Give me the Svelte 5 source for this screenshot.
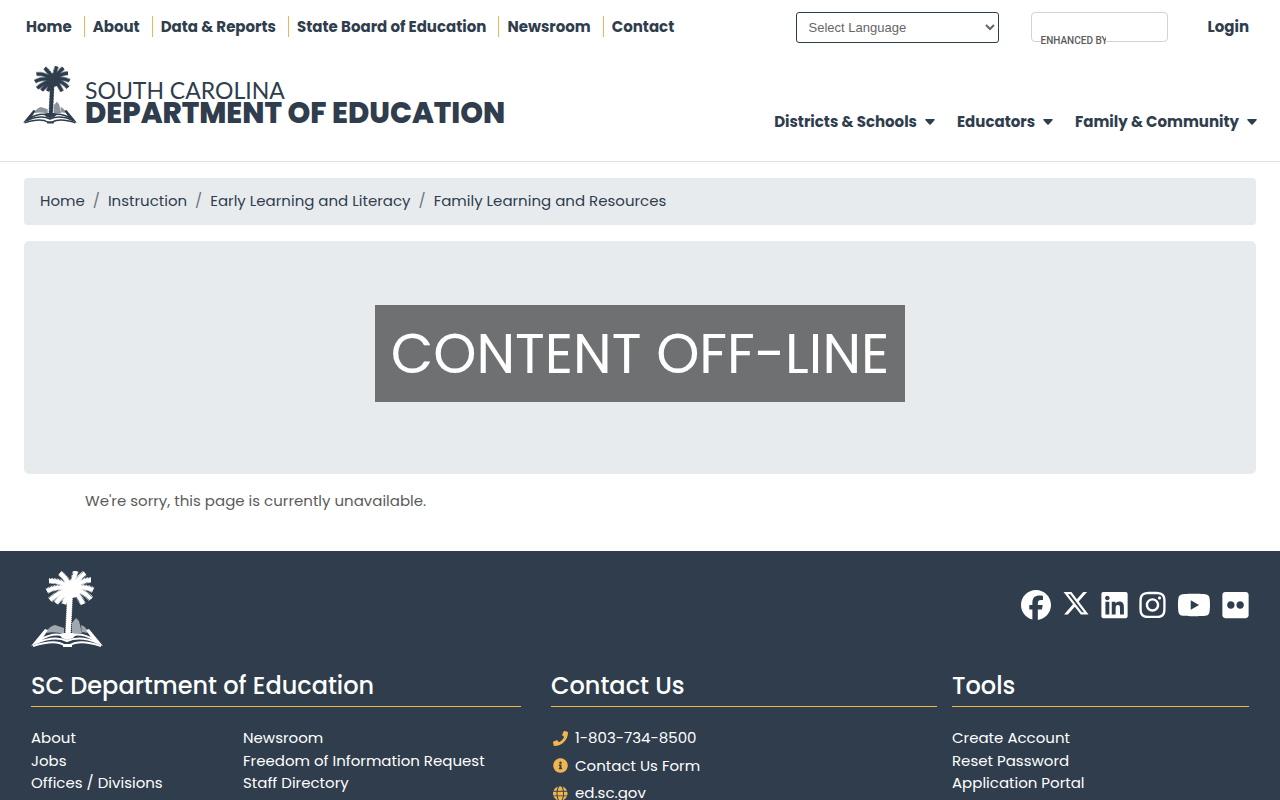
<script lang="ts">
	const topLinks = [
		'Home',
		'About',
		'Data & Reports',
		'State Board of Education',
		'Newsroom',
		'Contact'
	];
	const menus = ['Districts & Schools', 'Educators', 'Family & Community'];
	const crumbs = [
		'Home',
		'Instruction',
		'Early Learning and Literacy',
		'Family Learning and Resources'
	];
	const aboutLinks = ['About', 'Jobs', 'Offices / Divisions'];
	const newsLinks = ['Newsroom', 'Freedom of Information Request', 'Staff Directory'];
	const tools = ['Create Account', 'Reset Password', 'Application Portal', 'Technical Help'];

	// one curve per palm frond, from the crown outwards
	const fronds = [
		'M41 18Q42 8 45 0',
		'M41 18Q36 8 29 2',
		'M41 18Q30 9 18 10',
		'M41 18Q27 14 16 20',
		'M41 18Q29 20 19 29',
		'M41 18Q31 24 25 32',
		'M41 18Q35 26 33 33',
		'M41 18Q46 8 54 2',
		'M41 18Q50 9 60 9',
		'M41 18Q52 14 62 19',
		'M41 18Q52 19 60 28',
		'M41 18Q48 24 52 33'
	];

	// Font Awesome outlines
	const social = [
		{
			name: 'Facebook',
			box: '0 0 512 512',
			width: 30,
			d: 'M512 256C512 114.600 397.400 0 256 0S0 114.600 0 256c0 120 82.700 220.800 194.200 248.500V334.200h-52.800V256h52.800v-33.700c0-87.100 39.400-127.500 125-127.500 16.200 0 44.200 3.200 55.700 6.400V172c-6-.6-16.500-1-29.600-1-42 0-58.200 15.900-58.200 57.200V256h83.600l-14.400 78.200H287v175.900C413.800 494.800 512 386.900 512 256z'
		},
		{
			name: 'X',
			box: '-2 11 516 553',
			width: 28,
			d: 'M389.200 48h70.600L305.600 224.200 487 464H345L233.700 318.600 106.500 464H35.800l164.900-188.500L26.800 48h145.600l100.500 132.900L389.200 48zm-24.800 373.800h39.100L151.100 88h-42l255.300 333.800z'
		},
		{
			name: 'LinkedIn',
			box: '0 0 448 512',
			width: 27,
			d: 'M416 32H31.900C14.300 32 0 46.500 0 64.300v383.400C0 465.500 14.300 480 31.900 480H416c17.600 0 32-14.500 32-32.300V64.300c0-17.800-14.400-32.300-32-32.300zM135.400 416H69V202.200h66.500V416zm-33.200-243c-21.300 0-38.500-17.300-38.500-38.500S80.900 96 102.200 96c21.200 0 38.500 17.300 38.500 38.500 0 21.300-17.200 38.500-38.500 38.500zm282.100 243h-66.400V312c0-24.800-.5-56.700-34.500-56.700-34.600 0-39.900 27-39.900 54.900V416h-66.400V202.200h63.700v29.200h.9c8.900-16.800 30.600-34.500 62.900-34.500 67.200 0 79.700 44.300 79.700 101.900V416z'
		},
		{
			name: 'Instagram',
			box: '0 0 448 512',
			width: 27,
			d: 'M224.100 141c-63.600 0-114.900 51.300-114.900 114.900s51.300 114.900 114.900 114.900S339 319.500 339 255.900 287.700 141 224.100 141zm0 189.600c-41.100 0-74.700-33.500-74.700-74.700s33.500-74.700 74.700-74.700 74.700 33.500 74.700 74.700-33.600 74.700-74.700 74.700zm146.400-194.300c0 14.900-12 26.800-26.800 26.800-14.900 0-26.800-12-26.800-26.800s12-26.800 26.800-26.800 26.800 12 26.800 26.800zm76.100 27.200c-1.700-35.900-9.900-67.700-36.200-93.900-26.200-26.200-58-34.400-93.900-36.200-37-2.100-147.900-2.100-184.900 0-35.800 1.700-67.600 9.900-93.900 36.100s-34.400 58-36.200 93.900c-2.100 37-2.100 147.900 0 184.900 1.700 35.900 9.900 67.700 36.200 93.900s58 34.400 93.900 36.200c37 2.100 147.900 2.100 184.900 0 35.900-1.700 67.700-9.900 93.900-36.200 26.200-26.200 34.400-58 36.200-93.900 2.100-37 2.100-147.800 0-184.800zM398.800 388c-7.800 19.600-22.900 34.700-42.600 42.600-29.500 11.700-99.500 9-132.100 9s-102.700 2.600-132.100-9c-19.600-7.800-34.700-22.900-42.600-42.600-11.700-29.500-9-99.500-9-132.100s-2.600-102.700 9-132.100c7.800-19.600 22.900-34.700 42.600-42.600 29.500-11.700 99.500-9 132.100-9s102.700-2.600 132.100 9c19.600 7.800 34.700 22.900 42.600 42.600 11.700 29.500 9 99.500 9 132.100s2.700 102.700-9 132.100z'
		},
		{
			name: 'YouTube',
			box: '0 0 576 512',
			width: 34,
			d: 'M549.700 124.100c-6.300-23.700-24.800-42.300-48.300-48.600C458.800 64 288 64 288 64S117.200 64 74.600 75.500c-23.500 6.300-42 24.900-48.300 48.600-11.400 42.900-11.400 132.300-11.400 132.300s0 89.400 11.400 132.300c6.300 23.700 24.800 41.500 48.300 47.800C117.200 448 288 448 288 448s170.800 0 213.400-11.500c23.500-6.300 42-24.200 48.300-47.800 11.400-42.900 11.400-132.300 11.400-132.300s0-89.400-11.400-132.300zM232.200 337.600V175.200l142.700 81.200-142.700 81.200z'
		},
		{
			name: 'Flickr',
			box: '0 0 448 512',
			width: 27,
			d: 'M400 32H48C21.500 32 0 53.500 0 80v352c0 26.500 21.500 48 48 48h352c26.500 0 48-21.500 48-48V80c0-26.500-21.500-48-48-48zM144.500 319c-35.100 0-63.500-28.400-63.500-63.500s28.400-63.500 63.500-63.500 63.500 28.400 63.500 63.500-28.400 63.500-63.500 63.500zm159 0c-35.100 0-63.500-28.400-63.500-63.500s28.400-63.500 63.500-63.500 63.500 28.400 63.500 63.500-28.400 63.500-63.500 63.500z'
		}
	];

	const contacts = [
		{
			text: '1-803-734-8500',
			d: 'M493.400 24.600l-104-24c-11.300-2.600-22.900 3.300-27.500 13.900l-48 112c-4.200 9.800-1.400 21.300 6.900 28l60.600 49.600c-36 76.700-98.900 140.500-177.200 177.200l-49.600-60.600c-6.800-8.300-18.200-11.100-28-6.900l-112 48C3.900 366.500-2 378.100.6 389.400l24 104C27.100 504.200 36.700 512 48 512c256.100 0 464-207.500 464-464 0-11.200-7.700-20.900-18.600-23.400z'
		},
		{
			text: 'Contact Us Form',
			d: 'M256 8C119 8 8 119 8 256s111 248 248 248 248-111 248-248S393 8 256 8zm0 110a42 42 0 1 1 0 84 42 42 0 0 1 0-84zm56 254c0 6.600-5.400 12-12 12h-88c-6.600 0-12-5.400-12-12v-24c0-6.600 5.400-12 12-12h12v-64h-12c-6.600 0-12-5.400-12-12v-24c0-6.600 5.400-12 12-12h64c6.600 0 12 5.400 12 12v100h12c6.600 0 12 5.400 12 12v24z'
		},
		{
			text: 'ed.sc.gov',
			d: 'M336.500 160C322 70.700 287.800 8 248 8s-74 62.700-88.500 152h177zM152 256c0 22.200 1.200 43.500 3.300 64h185.300c2.100-20.500 3.300-41.800 3.300-64s-1.200-43.500-3.300-64H155.300c-2.100 20.500-3.300 41.800-3.300 64zm324.700-96c-28.600-67.900-86.500-120.400-158-141.600 24.400 33.800 41.200 84.700 50 141.600h108zM177.200 18.400C105.800 39.600 47.800 92.100 19.300 160h108c8.700-56.900 25.500-107.800 49.900-141.600zM487.400 192H372.700c2.100 21 3.300 42.500 3.300 64s-1.200 43-3.300 64h114.600c5.500-20.500 8.600-41.800 8.600-64s-3.100-43.500-8.500-64zM120 256c0-21.500 1.200-43 3.300-64H8.600C3.200 212.500 0 233.800 0 256s3.200 43.500 8.600 64h114.600c-2-21-3.200-42.500-3.200-64zm39.500 96c14.500 89.300 48.700 152 88.500 152s74-62.700 88.500-152h-177zm159.300 141.600c71.400-21.200 129.400-73.700 158-141.600h-108c-8.800 56.900-25.600 107.800-50 141.600zM19.300 352c28.600 67.900 86.500 120.400 158 141.600-24.400-33.800-41.200-84.700-50-141.600h-108z'
		}
	];
</script>

<svelte:head>
	<title>Content Off-Line - South Carolina Department of Education</title>
</svelte:head>

{#snippet palmetto()}
	<svg class="palmetto" viewBox="0 0 72 76" aria-hidden="true">
		<g fill="none" stroke="currentColor">
			{#each fronds as frond}
				<path d={frond} stroke-width="4" />
				<path d={frond} stroke-width="6" stroke-dasharray="0.7 0.7" />
			{/each}
			<path d="M39 24Q38 44 37 64" stroke-width="5" />
			<path d="M39 24Q38 44 37 64" stroke-width="6" stroke-dasharray="1 1" />
			<path d="M9 69Q24 60 36 66Q49 60 63 69" stroke-width="2" />
			<path d="M5 72Q24 64 36 70Q49 64 67 72" stroke-width="2" />
			<path d="M2 75Q24 68 33 74h6Q49 68 70 75" stroke-width="2" />
		</g>
		<g fill="currentColor">
			<circle cx="41" cy="18" r="9" />
			<path d="M0 75 14 58l3 1-8 12zM72 75 58 58l-3 1 8 12z" />
			<path d="M28 63l5-1h8l5 1-4 4-6 2-5-2z" />
			<path d="M32 74h9v2h-9z" />
			<path
				d="M15 62Q18 55 24 54l9 3v6q-9-3-18-1zM41 52l4-5 3 3 3 12-10 1zM50 54q5 1 7 8l-6-1z"
				opacity="0.55"
			/>
		</g>
	</svg>
{/snippet}

<header>
	<div class="top-bar">
		<nav class="top-links" aria-label="Primary">
			{#each topLinks as link}
				<a href="#top">{link}</a>
			{/each}
		</nav>
		<div class="utilities">
			<select aria-label="Select Language">
				<option>Select Language</option>
			</select>
			<div class="search">
				<input type="search" aria-label="Search" />
				<span class="enhanced">ENHANCED BY</span>
			</div>
			<a class="login" href="#login">Login</a>
		</div>
	</div>
	<div class="brand-bar">
		<a class="brand" href="#home">
			{@render palmetto()}
			<span class="brand-name">
				<span class="state">SOUTH CAROLINA</span>
				<span class="dept">DEPARTMENT OF EDUCATION</span>
			</span>
		</a>
		<nav class="menus" aria-label="Audiences">
			{#each menus as menu}
				<button>
					{menu}
					<svg viewBox="0 0 10 6" aria-hidden="true"><path d="M1 0h8q1 0 .7 1L5.700 5.500q-.7.6-1.400 0L.3 1Q0 0 1 0z" /></svg>
				</button>
			{/each}
		</nav>
	</div>
</header>

<main>
	<nav class="breadcrumb" aria-label="Breadcrumb">
		{#each crumbs as crumb, i}
			{#if i > 0}<span class="slash">/</span>{/if}
			<a href="#crumb">{crumb}</a>
		{/each}
	</nav>
	<section class="hero">
		<h1>CONTENT OFF-LINE</h1>
	</section>
	<p class="notice">We're sorry, this page is currently unavailable.</p>
</main>

<footer>
	<div class="footer-top">
		{@render palmetto()}
		<div class="social">
			{#each social as item}
				<a href="#social" aria-label={item.name}>
					<svg viewBox={item.box} width={item.width} height="30"><path d={item.d} /></svg>
				</a>
			{/each}
		</div>
	</div>
	<div class="columns">
		<section>
			<h2>SC Department of Education</h2>
			<div class="link-lists">
				<ul>
					{#each aboutLinks as link}
						<li><a href="#footer">{link}</a></li>
					{/each}
				</ul>
				<ul>
					{#each newsLinks as link}
						<li><a href="#footer">{link}</a></li>
					{/each}
				</ul>
			</div>
		</section>
		<section>
			<h2>Contact Us</h2>
			<ul class="contacts">
				{#each contacts as contact}
					<li>
						<svg viewBox="0 0 512 512" width="15" height="15" aria-hidden="true"><path d={contact.d} /></svg>
						<a href="#contact">{contact.text}</a>
					</li>
				{/each}
			</ul>
		</section>
		<section class="tools">
			<h2>Tools</h2>
			<ul>
				{#each tools as tool}
					<li><a href="#tools">{tool}</a></li>
				{/each}
			</ul>
		</section>
	</div>
</footer>

<style>
	:global(body) {
		margin: 0;
		background: #fff;
		color: #5b5b5b;
		font-family: Poppins, Inter, sans-serif;
		font-size: 15px;
		line-height: 1.5;
	}

	a {
		color: inherit;
		text-decoration: none;
	}

	ul {
		list-style: none;
		margin: 0;
		padding: 0;
	}

	header {
		color: #2f3d4d;
		border-bottom: 1px solid #dee2e6;
	}

	.top-bar {
		display: flex;
		justify-content: space-between;
		padding: 12px 31px 0 26px;
		font-weight: 700;
	}

	.top-links {
		display: flex;
		align-items: flex-start;
		padding-top: 4px;
	}

	.top-links a {
		line-height: 21px;
		padding-right: 12px;
		margin-right: 8px;
		border-right: 1px solid #f0b64d;
	}

	.top-links a:last-child {
		border-right: 0;
	}

	.utilities {
		display: flex;
		align-items: flex-start;
	}

	.login {
		padding-top: 4px;
		line-height: 21px;
	}

	select {
		width: 203px;
		height: 31px;
		padding: 0 0 0 8px;
		margin-right: 32px;
		border: 1px solid #2f3d4d;
		border-radius: 3px;
		background: #fff;
		color: #666;
		font-family: 'Liberation Sans', sans-serif;
		font-size: 13px;
	}

	.search {
		position: relative;
		width: 137px;
		height: 30px;
		margin-right: 40px;
	}

	.search input {
		box-sizing: border-box;
		display: block;
		width: 100%;
		height: 30px;
		border: 1px solid #ced4da;
		border-radius: 4px;
		background: #fff;
	}

	.enhanced {
		position: absolute;
		left: 10px;
		top: 23px;
		width: 65px;
		overflow: hidden;
		white-space: nowrap;
		background: #fff;
		color: #5b5b5b;
		font-family: Roboto, sans-serif;
		font-size: 10px;
		font-weight: 500;
		line-height: 12px;
	}

	.brand-bar {
		display: flex;
		justify-content: space-between;
		align-items: flex-end;
		padding: 23px 23px 28px;
	}

	.brand {
		display: flex;
		align-items: flex-end;
		gap: 8px;
		margin-bottom: 9px;
	}

	.palmetto {
		display: block;
	}

	.brand .palmetto {
		width: 54px;
		height: 58px;
	}

	.brand-name {
		display: flex;
		flex-direction: column;
		white-space: nowrap;
	}

	.state {
		font-family: Lato, sans-serif;
		font-size: 23px;
		line-height: 24px;
	}

	.dept {
		font-size: 29px;
		font-weight: 800;
		line-height: 22px;
	}

	.menus {
		display: flex;
		gap: 22px;
	}

	.menus button {
		display: flex;
		align-items: center;
		gap: 8px;
		padding: 0;
		border: 0;
		background: none;
		color: inherit;
		font: inherit;
		font-weight: 700;
	}

	.menus svg {
		width: 10px;
		height: 6px;
		fill: currentColor;
	}

	main {
		padding: 16px 24px 39px;
	}

	.breadcrumb {
		display: flex;
		gap: 8px;
		padding: 12px 16px;
		margin-bottom: 16px;
		border-radius: 4px;
		background: #e8ebee;
		color: #2f3d4d;
	}

	.slash {
		color: #6c757d;
	}

	.hero {
		display: flex;
		justify-content: center;
		padding: 64px 32px 72px;
		border-radius: 5px;
		background: #e8ebee;
	}

	h1 {
		margin: 0;
		padding: 14px 16px;
		background: #6f7072;
		color: #fff;
		font-size: 55px;
		font-weight: 400;
		line-height: 69px;
	}

	.notice {
		margin: 16px 61px 0;
	}

	footer {
		padding: 20px 16px 32px;
		background: #2f3d4d;
		color: #fff;
	}

	.footer-top {
		display: flex;
		justify-content: space-between;
		padding: 0 15px;
		margin-bottom: 22px;
	}

	.footer-top .palmetto {
		width: 72px;
		height: 76px;
	}

	.social {
		display: flex;
		gap: 11px;
		padding-top: 19px;
	}

	.social svg {
		display: block;
		fill: currentColor;
	}

	.columns {
		display: grid;
		grid-template-columns: 5fr 4fr 3fr;
	}

	.columns section {
		padding: 0 15px;
	}

	.columns .tools {
		padding-left: 0;
	}

	h2 {
		margin: 0 0 20px;
		padding-bottom: 3px;
		border-bottom: 1px solid #f0b64d;
		font-size: 24px;
		font-weight: 500;
		line-height: 34px;
	}

	.link-lists {
		display: grid;
		grid-template-columns: 212px 1fr;
	}

	.contacts li {
		display: flex;
		align-items: center;
		gap: 7px;
		padding-left: 2px;
		margin-bottom: 5px;
	}

	.contacts svg {
		fill: #f0b64d;
	}
</style>
